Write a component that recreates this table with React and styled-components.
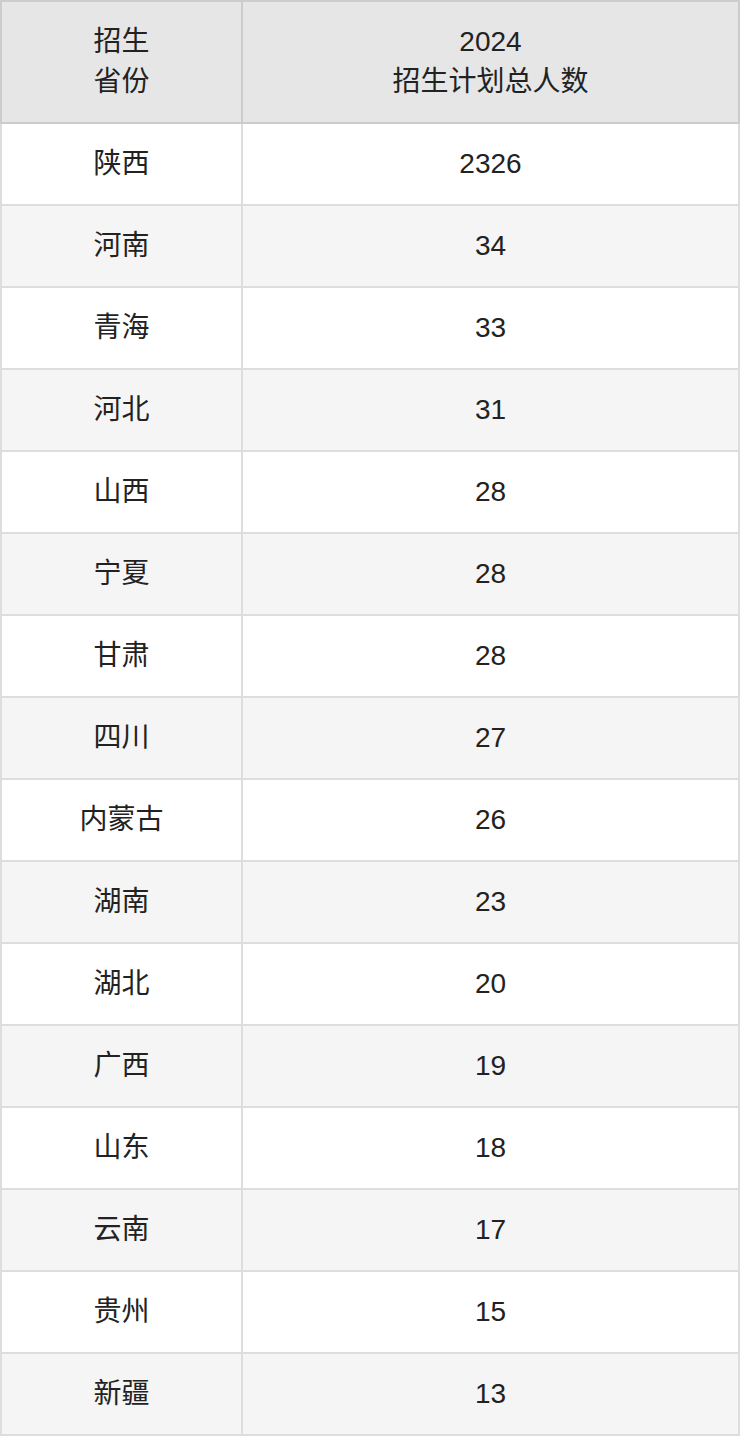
import React from "react";
import styled, { createGlobalStyle } from "styled-components";

const GlobalStyle = createGlobalStyle`
  html, body {
    margin: 0;
    padding: 0;
    background: #ffffff;
  }
  body {
    font-family: "Liberation Sans", "Noto Sans CJK SC", sans-serif;
    color: #222222;
  }
`;

const rows = [
  ["陕西", "2326"],
  ["河南", "34"],
  ["青海", "33"],
  ["河北", "31"],
  ["山西", "28"],
  ["宁夏", "28"],
  ["甘肃", "28"],
  ["四川", "27"],
  ["内蒙古", "26"],
  ["湖南", "23"],
  ["湖北", "20"],
  ["广西", "19"],
  ["山东", "18"],
  ["云南", "17"],
  ["贵州", "15"],
  ["新疆", "13"],
];

const Table = styled.table`
  width: 740px;
  border-collapse: collapse;
  table-layout: fixed;
  font-size: 28px;
  line-height: 40px;
  color: #222222;
`;

const HeadCell = styled.th`
  width: ${(p) => p.$width || "auto"};
  background: #e6e6e6;
  border: 2px solid #cccccc;
  padding: 20px 10px;
  font-weight: normal;
  text-align: center;
  vertical-align: middle;
`;

const Row = styled.tr`
  background: ${(p) => (p.$striped ? "#f5f5f5" : "#ffffff")};
`;

const Cell = styled.td`
  border: 2px solid #dddddd;
  padding: 20px 10px;
  height: 40px;
  text-align: center;
  vertical-align: middle;
`;

export default function App() {
  return (
    <>
      <GlobalStyle />
      <Table>
        <thead>
          <tr>
            <HeadCell $width="219px">
              招生
              <br />
              省份
            </HeadCell>
            <HeadCell>
              2024
              <br />
              招生计划总人数
            </HeadCell>
          </tr>
        </thead>
        <tbody>
          {rows.map(([province, count], i) => (
            <Row key={province} $striped={i % 2 === 1}>
              <Cell>{province}</Cell>
              <Cell>{count}</Cell>
            </Row>
          ))}
        </tbody>
      </Table>
    </>
  );
}
